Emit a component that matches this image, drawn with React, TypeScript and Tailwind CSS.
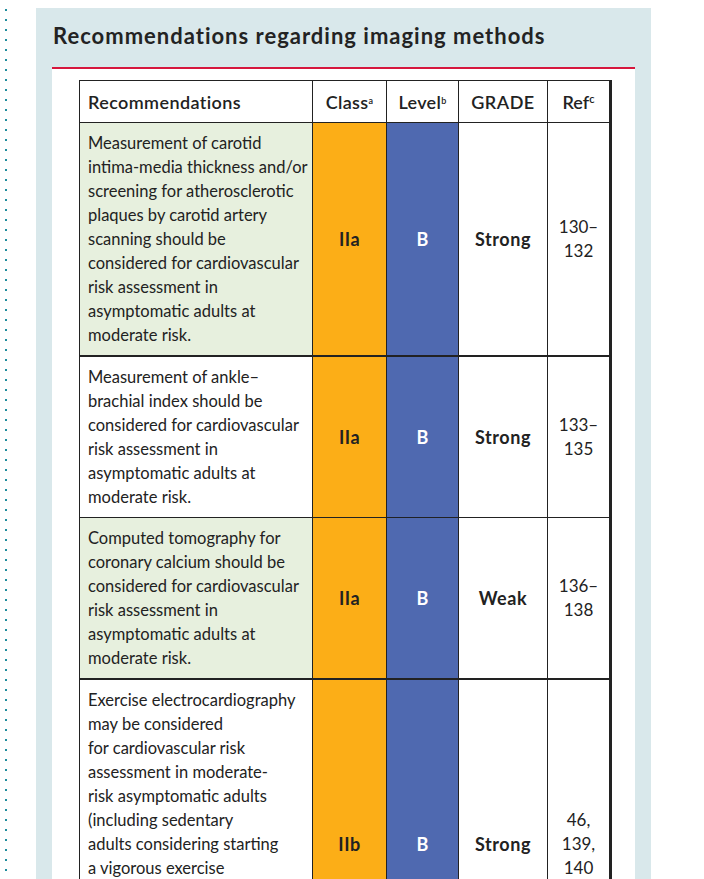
const ORANGE = "bg-[#fcae17]";
const BLUE = "bg-[#4f69b0]";

type Row = {
	text: string[];
	green: boolean;
	cls: string;
	level: string;
	grade: string;
	refs: string[];
};

const ROWS: Row[] = [
	{
		text: [
			"Measurement of carotid",
			"intima-media thickness and/or",
			"screening for atherosclerotic",
			"plaques by carotid artery",
			"scanning should be",
			"considered for cardiovascular",
			"risk assessment in",
			"asymptomatic adults at",
			"moderate risk.",
		],
		green: true,
		cls: "IIa",
		level: "B",
		grade: "Strong",
		refs: ["130–", "132"],
	},
	{
		text: [
			"Measurement of ankle–",
			"brachial index should be",
			"considered for cardiovascular",
			"risk assessment in",
			"asymptomatic adults at",
			"moderate risk.",
		],
		green: false,
		cls: "IIa",
		level: "B",
		grade: "Strong",
		refs: ["133–", "135"],
	},
	{
		text: [
			"Computed tomography for",
			"coronary calcium should be",
			"considered for cardiovascular",
			"risk assessment in",
			"asymptomatic adults at",
			"moderate risk.",
		],
		green: true,
		cls: "IIa",
		level: "B",
		grade: "Weak",
		refs: ["136–", "138"],
	},
	{
		text: [
			"Exercise electrocardiography",
			"may be considered",
			"for cardiovascular risk",
			"assessment in moderate-",
			"risk asymptomatic adults",
			"(including sedentary",
			"adults considering starting",
			"a vigorous exercise",
			"programme), particularly",
			"when attention is paid to",
			"non-ECG markers such as",
			"exercise capacity.",
			"",
		],
		green: false,
		cls: "IIb",
		level: "B",
		grade: "Strong",
		refs: ["46,", "139,", "140"],
	},
];

export default function App() {
	return (
		<div
			className="flex h-[879px] overflow-hidden bg-white text-[#222]"
			style={{ fontFamily: "Lato, 'Open Sans', sans-serif" }}
		>
			{/* dotted margin rule */}
			<div className="w-[36px] shrink-0 pt-[9px]">
				<div className="ml-[5px] h-full w-[2px] bg-[repeating-linear-gradient(to_bottom,#1f8c9c_0px,#1f8c9c_2px,transparent_2px,transparent_10px)]" />
			</div>

			<div className="mt-[8px] w-[615px] shrink-0 bg-[#d9e8eb] px-4">
				<h1 className="pt-[14px] pl-[1px] text-[22px] font-bold leading-[28px] tracking-[1px] text-[#232323]">
					Recommendations regarding imaging methods
				</h1>

				<div className="mt-[17px] border-t-2 border-[#d6173d] bg-white pt-[11px] pl-[27px]">
					<table className="w-[531px] table-fixed border-collapse text-[16.5px] leading-[24px]">
						<colgroup>
							<col className="w-[233px]" />
							<col className="w-[74px]" />
							<col className="w-[72px]" />
							<col className="w-[89px]" />
							<col className="w-[63px]" />
						</colgroup>
						<thead>
							<tr className="h-[42px] text-[18px] font-semibold">
								<th className="border border-[#222] px-2 text-left font-semibold tracking-[0.4px]">
									Recommendations
								</th>
								<th className="border border-[#222] text-center font-semibold tracking-[0.3px]">
									Class<sup className="text-[9px]">a</sup>
								</th>
								<th className="border border-[#222] text-center font-semibold tracking-[0.3px]">
									Level<sup className="text-[9px]">b</sup>
								</th>
								<th className="border border-[#222] text-center font-semibold tracking-[0.5px]">
									GRADE
								</th>
								<th className="border border-[#222] border-r-[3px] text-center font-semibold">
									Ref<sup className="text-[11px]">c</sup>
								</th>
							</tr>
						</thead>
						<tbody>
							{ROWS.map((row, i) => {
								const thick = i === 0 || i === 2 ? "border-b-2" : "";
								return (
									<tr key={i}>
										<td
											className={`border border-[#222] px-2 py-2 align-middle ${
												row.green ? "bg-[#e7f0de]" : "bg-white"
											} ${thick}`}
										>
											{row.text.map((line, j) => (
												<div key={j} className="h-[24px] whitespace-nowrap">
													{line}
												</div>
											))}
										</td>
										<td
											className={`border border-[#222] text-center align-middle text-[18px] font-bold tracking-[0.5px] ${ORANGE} ${thick}`}
										>
											{row.cls}
										</td>
										<td
											className={`border border-[#222] text-center align-middle text-[18px] font-bold text-white ${BLUE} ${thick}`}
										>
											{row.level}
										</td>
										<td
											className={`border border-[#222] text-center align-middle text-[18px] font-bold tracking-[0.6px] ${thick}`}
										>
											{row.grade}
										</td>
										<td
											className={`border border-[#222] border-r-[3px] text-center align-middle text-[17px] ${thick}`}
										>
											{row.refs.map((r, j) => (
												<div key={j}>{r}</div>
											))}
										</td>
									</tr>
								);
							})}
						</tbody>
					</table>
				</div>
			</div>
		</div>
	);
}
